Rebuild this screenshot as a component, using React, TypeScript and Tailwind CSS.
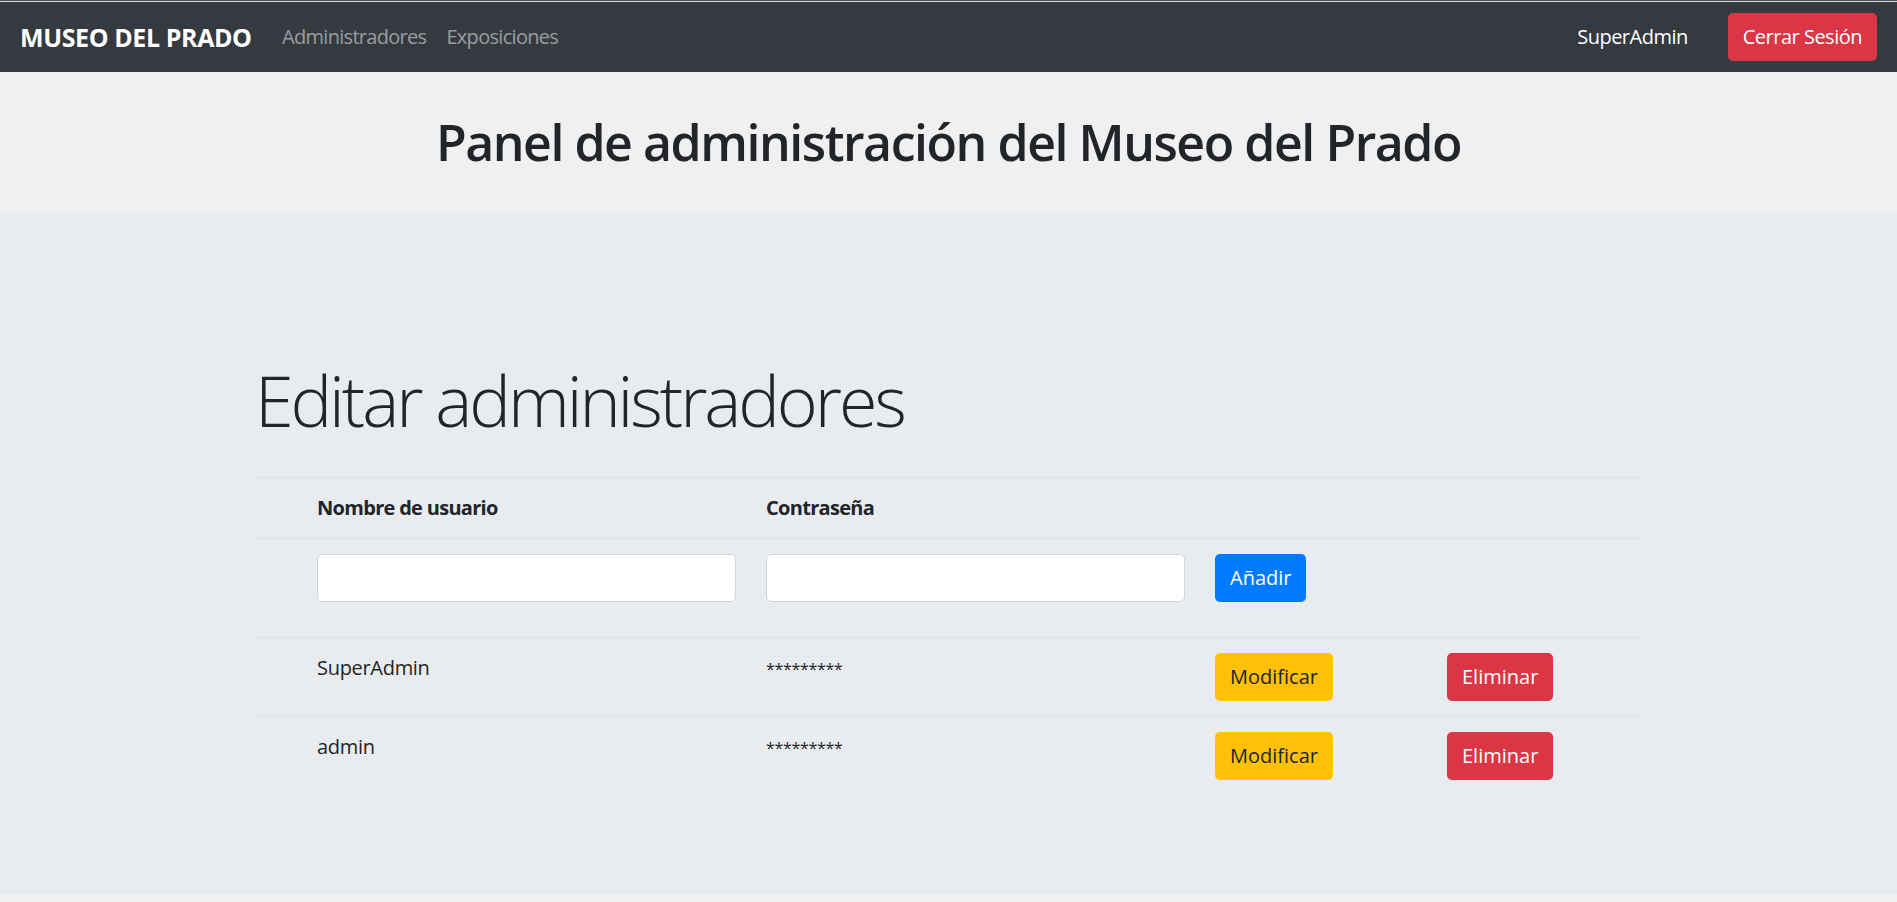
import React from 'react';

interface Admin {
  name: string;
  password: string;
}

const admins: Admin[] = [
  { name: 'SuperAdmin', password: '*********' },
  { name: 'admin', password: '*********' },
];

const btn = 'h-[48px] px-[15px] rounded-[5px] text-[20px] leading-[30px]';

export default function App() {
  return (
    <div className="min-h-[902px] bg-[#f0f0f0] text-[#212529] font-['Open_Sans',sans-serif]">
      {/* Top edge */}
      <div className="h-px bg-[#4b4f55]" />
      <div className="h-px bg-[#dcdcdc]" />

      {/* Navbar */}
      <nav className="h-[70px] bg-[#343a40] flex items-center px-5">
        <div className="w-[262px] text-[25px] font-bold text-white leading-[38px] tracking-[-0.4px]">MUSEO DEL PRADO</div>
        <div className="flex items-center gap-5 text-[20px] text-white/50 tracking-[-0.7px]">
          <a>Administradores</a>
          <a>Exposiciones</a>
        </div>
        <div className="ml-auto flex items-center gap-10">
          <span className="text-[20px] text-white tracking-[-0.5px]">SuperAdmin</span>
          <button className={`${btn} bg-[#dc3545] text-white tracking-[-0.5px]`}>Cerrar Sesión</button>
        </div>
      </nav>

      {/* Header */}
      <header className="h-[140px] flex items-center justify-center">
        <h1 className="text-[50px] font-semibold leading-[60px] tracking-[-1.45px] text-[#212529]">
          Panel de administración del Museo del Prado
        </h1>
      </header>

      {/* Jumbotron */}
      <section className="bg-[#e9ecef] pt-[146px] pb-[99px]">
        <div className="w-[1425px] mx-auto px-[19px]">
          <h2 className="text-[70px] font-light leading-[84px] tracking-[-3.1px]">Editar administradores</h2>

          <table className="w-full mt-[35px] text-[20px] leading-[30px] border-collapse">
            <colgroup>
              <col className="w-[47px]" />
              <col className="w-[449px]" />
              <col className="w-[449px]" />
              <col className="w-[232px]" />
              <col />
            </colgroup>
            <thead>
              <tr className="border-t border-[#dee2e6]">
                <th className="p-[15px]" />
                <th className="p-[15px] text-left font-bold tracking-[-0.7px]">Nombre de usuario</th>
                <th className="p-[15px] text-left font-bold tracking-[-0.7px]">Contraseña</th>
                <th className="p-[15px]" />
                <th className="p-[15px]" />
              </tr>
            </thead>
            <tbody>
              <tr className="border-t border-[#dee2e6] align-top">
                <td className="p-[15px]" />
                <td className="px-[15px] pt-[15px] pb-[35px]">
                  <input className="w-full h-[48px] bg-white border border-[#ced4da] rounded-[5px]" />
                </td>
                <td className="px-[15px] pt-[15px] pb-[35px]">
                  <input className="w-full h-[48px] bg-white border border-[#ced4da] rounded-[5px]" />
                </td>
                <td className="px-[15px] pt-[15px] pb-[35px]">
                  <button className={`${btn} bg-[#007bff] text-white`}>Añadir</button>
                </td>
                <td />
              </tr>
              {admins.map((a) => (
                <tr key={a.name} className="border-t border-[#dee2e6] align-top">
                  <td className="p-[15px]" />
                  <td className="p-[15px] tracking-[-0.3px]">{a.name}</td>
                  <td className="p-[15px]">
                    <span className="text-[16px] tracking-[-0.3px]">{a.password}</span>
                  </td>
                  <td className="p-[15px]">
                    <button className={`${btn} bg-[#ffc107] text-[#212529]`}>Modificar</button>
                  </td>
                  <td className="p-[15px]">
                    <button className={`${btn} bg-[#dc3545] text-white`}>Eliminar</button>
                  </td>
                </tr>
              ))}
            </tbody>
          </table>
        </div>
      </section>
    </div>
  );
}
